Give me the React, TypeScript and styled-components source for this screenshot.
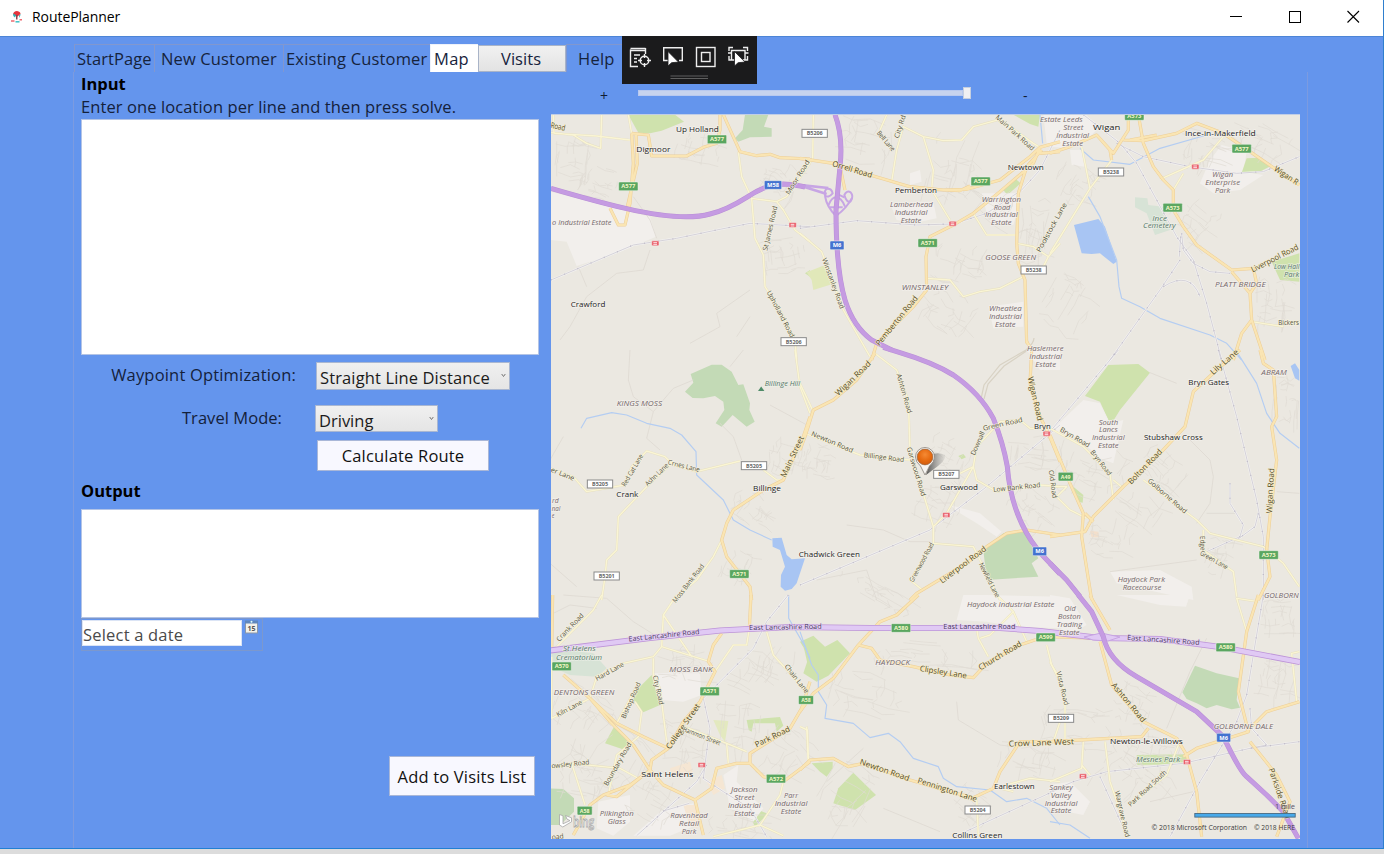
import React from "react";
import styled, { createGlobalStyle } from "styled-components";

const Global = createGlobalStyle`
  * { box-sizing: border-box; }
  body { margin: 0; overflow: hidden; background: #dcdcdc; font-family: "Open Sans", "Noto Sans", sans-serif; }
`;

const Window = styled.div`
  position: relative;
  width: 1384px;
  height: 849px;
  display: flex;
  flex-direction: column;
  background: #6495ed;
  border-right: 1px solid #2f7fce;
  border-bottom: 1px solid #2180d3;
  box-shadow: 0 1px 4px rgba(0, 0, 0, 0.45);
`;
const TitleBar = styled.header`
  height: 37px;
  flex: none;
  display: flex;
  align-items: center;
  padding: 0 0 3px 10px;
  background: #fff;
  border-bottom: 1px solid #4c84d6;
`;
const Title = styled.h1`
  flex: 1;
  margin: 0 0 0 9px;
  font-size: 14px;
  font-weight: 400;
  letter-spacing: -0.06px;
  color: #000;
`;
const Controls = styled.div`
  display: flex;
  width: 176px;
  height: 34px;
`;
const ControlButton = styled.button`
  flex: 1;
  padding: 0;
  border: 0;
  background: none;
  display: grid;
  place-items: center;
`;
const TabStrip = styled.nav`
  flex: none;
  height: 35px;
  padding: 7px 0 0 74px;
  display: flex;
`;
const Tab = styled.button<{ $w: number; $kind?: "active" | "button"; $ls?: number; $pl?: number }>`
  width: ${(p) => p.$w}px;
  height: 28px;
  margin: 0;
  padding: 0 0 0 ${(p) => p.$pl ?? 3}px;
  display: flex;
  align-items: center;
  white-space: nowrap;
  font: 16.5px "Open Sans", sans-serif;
  letter-spacing: ${(p) => p.$ls ?? 0.05}px;
  color: #16233c;
  border: 0 solid #8197cf;
  border-top-width: 1px;
  border-left-width: 1px;
  background: ${(p) => (p.$kind === "active" ? "#fff" : p.$kind === "button" ? "linear-gradient(#f1f1f1, #e3e3e3)" : "transparent")};
  ${(p) => p.$kind === "active" && "border-color: #eef2fa;"}
  ${(p) => p.$kind === "button" && "border: 1px solid #a9b4c8; height: 27px; margin-top: 1px;"}
`;
const Content = styled.main`
  flex: 1;
  width: 1235px;
  margin-left: 73px;
  padding-left: 7px;
  display: flex;
  border: 0 solid #7c9be0;
  border-left-width: 1px;
  border-right-width: 1px;
`;
const Form = styled.section`
  width: 458px;
  display: flex;
  flex-direction: column;
  color: #14213b;
`;
const Heading = styled.h2<{ $h: number; $lh: number }>`
  margin: 0;
  height: ${(p) => p.$h}px;
  line-height: ${(p) => p.$lh}px;
  font-size: 16.5px;
  font-weight: 700;
  color: #000;
`;
const Hint = styled.p`
  margin: 0;
  height: 23px;
  line-height: 22px;
  font-size: 16.5px;
  letter-spacing: 0.1px;
  white-space: nowrap;
`;
const TextBox = styled.textarea<{ $h: number }>`
  display: block;
  width: 458px;
  height: ${(p) => p.$h}px;
  resize: none;
  border: 1px solid #b3c4e6;
  background: #fff;
`;
const Row = styled.div<{ $mt: number; $label: number }>`
  margin-top: ${(p) => p.$mt}px;
  display: grid;
  grid-template-columns: ${(p) => p.$label}px auto;
  justify-content: start;
`;
const FieldLabel = styled.label<{ $right: number; $ls?: number }>`
  padding-right: ${(p) => p.$right}px;
  text-align: right;
  line-height: 26px;
  font-size: 16.5px;
  white-space: nowrap;
  letter-spacing: ${(p) => p.$ls ?? 0}px;
`;
const Combo = styled.div<{ $w: number; $h: number; $ls?: number }>`
  width: ${(p) => p.$w}px;
  height: ${(p) => p.$h}px;
  display: flex;
  justify-content: space-between;
  padding: 3px 3px 0 3px;
  line-height: 24px;
  font-size: 16.5px;
  white-space: nowrap;
  letter-spacing: ${(p) => p.$ls ?? 0}px;
  color: #1b1b1b;
  border: 1px solid #a9b7d2;
  background: linear-gradient(#f0f0f0, #e5e5e5);
  svg { margin-top: 7px; flex: none; }
`;
const PushButton = styled.button<{ $w: number; $h: number; $m: string }>`
  width: ${(p) => p.$w}px;
  height: ${(p) => p.$h}px;
  margin: ${(p) => p.$m};
  padding: 0;
  flex: none;
  font: 16.5px "Open Sans", sans-serif;
  letter-spacing: 0.18px;
  white-space: nowrap;
  color: #111;
  border: 1px solid #a9b7d8;
  background: #f8f8ff;
`;
const DatePicker = styled.div`
  width: 182px;
  height: 33px;
  padding: 1px 0 0 0;
  display: flex;
  gap: 3px;
  border: 1px solid #7c98cd;
`;
const DateInput = styled.div`
  width: 160px;
  height: 26px;
  padding-left: 0;
  line-height: 28px;
  font-size: 16.5px;
  letter-spacing: 0.2px;
  background: #fff;
  border: 1px solid #dbe4f5;
  color: #4a4a4a;
`;
const MapColumn = styled.section`
  margin-left: 12px;
  width: 749px;
`;
const ZoomBar = styled.div`
  height: 42px;
  padding: 15px 0 0 49px;
  display: flex;
  align-items: flex-start;
  color: #101c33;
  font-size: 14px;
  line-height: 18px;
`;
const Track = styled.div`
  width: 333px;
  height: 12px;
  margin: 0 52px 0 30px;
  display: flex;
  align-items: center;
  &::before { content: ""; flex: 1; height: 4px; background: #c7d3ee; border: 1px solid #b8c9ef; }
`;
const Thumb = styled.div`
  width: 8px;
  height: 12px;
  background: #f0f0f2;
  border: 1px solid #c5cfe0;
`;
const MapSvg = styled.svg`
  display: block;
  width: 749px;
  height: 725px;
  background: #ebe8e1;
  font-family: "Open Sans", sans-serif;
`;
const DebugBar = styled.div`
  position: absolute;
  left: 622px;
  top: 36px;
  width: 135px;
  height: 48px;
  background: #1b1b1c;
`;

/* ---------- map data: nine sheets, each drawn in its own 3x coordinates ---------- */
const sheets = {
  A: [550, 110], B: [800, 110], C: [1050, 110],
  D: [550, 350], E: [800, 350], F: [1050, 350],
  G: [550, 595], H: [800, 595], I: [1050, 595],
} as const;
type Sheet = keyof typeof sheets;
type Shape = [Sheet, string, string?];

const LIME = "#cfe2ad", GREEN = "#c3dab6", MINT = "#d7e3d6", PALE = "#f2efec", LAKE = "#a8c5f3";

const areas: Shape[] = [
  ["A", "M235,14L375,14L402,35L335,62L300,70L265,68Z", LIME],
  ["A", "M585,14L655,14L642,50L665,55L665,80L600,82L565,95L555,85L578,60Z", GREEN],
  ["A", "M3,245L180,290L300,320L318,380L200,430L80,468L50,395L3,390Z", PALE],
  ["A", "M780,480L765,490L780,500Z", LIME],
  ["B", "M20,487L75,465L85,500L105,520L40,540L35,510Z", "#e1e8b9"],
  ["B", "M640,14L720,14L715,50L690,42Z", LIME],
  ["B", "M610,240L645,205L662,220L622,255Z", LIME],
  ["B", "M270,280L400,275L410,325L340,340L290,330Z", PALE],
  ["B", "M330,190L360,180L365,215L330,225Z", PALE],
  ["B", "M545,250L650,250L660,280L640,345L575,345L560,310Z", PALE],
  ["B", "M565,590L670,575L670,650L580,655Z", PALE],
  ["B", "M730,14L780,14L780,110L740,100Z", PALE],
  ["C", "M0,14L110,14L140,60L110,90L60,115L0,110Z", PALE],
  ["C", "M60,120L100,120L105,170L65,165Z", PALE],
  ["C", "M515,105L590,125L580,185L640,195L570,240L490,250L450,220L480,150Z", PALE],
  ["C", "M590,145L630,143L658,170L620,190L575,188Z", LIME],
  ["C", "M72,345L145,327L165,350L200,455L190,462L150,430L125,432L95,430Z", LAKE],
  ["C", "M255,262L292,265L295,285L340,290L360,360L315,375L290,310L255,292Z", MINT],
  ["C", "M665,455L748,430L748,515L690,510Z", LIME],
  ["D", "M405,125L430,98L422,72L485,44L515,44L545,65L565,105L580,103L600,160L598,180L614,215L590,230L548,195L515,230L497,220L523,180L520,155L495,138L460,145L428,144Z", GREEN],
  ["D", "M667,565L695,563L710,615L725,628L765,625L740,700L725,717L705,722L692,710L693,675L705,650L690,600L668,590Z", LAKE],
  ["E", "M550,600L610,550L670,543L715,625L695,640L715,680L560,690Z", GREEN],
  ["E", "M475,318L490,312L498,322L485,328Z", LIME],
  ["E", "M450,465L540,490L605,545L590,560L530,520L480,490Z", PALE],
  ["E", "M680,0L780,0L780,60L720,60Z", PALE],
  ["F", "M175,45L265,42L300,68L210,180L190,212L175,210L150,155L105,138Z", LIME],
  ["F", "M0,245L100,150L150,160L180,220L220,210L190,340L150,325L80,260Z", PALE],
  ["F", "M180,665L330,660L425,710L430,750L200,700Z", PALE],
  ["F", "M70,410L100,435L98,458L85,455Z", LIME],
  ["F", "M722,48L735,40L748,60L748,92L735,85Z", LAKE],
  ["F", "M120,542L145,545L148,562L125,562Z", "#f3dfcb"],
  ["G", "M5,160L130,175L170,220L140,245L60,240L5,215Z", MINT],
  ["G", "M310,235L450,235L455,300L400,320L335,315L300,270Z", PALE],
  ["G", "M255,290L305,240L330,330L280,352L250,315Z", LIME],
  ["G", "M195,390L240,435L225,465L165,445Z", LIME],
  ["G", "M0,580L40,582L72,610L72,650L30,690L0,690Z", GREEN],
  ["G", "M590,375L690,366L700,392L680,410L675,385L610,385L605,410L596,405Z", LIME],
  ["G", "M490,375L535,378L525,440L510,420Z", "#e3e9bf"],
  ["G", "M625,645L650,655L640,670L615,695L603,670Z", LIME],
  ["G", "M145,620L240,600L240,680L190,722L140,700Z", PALE],
  ["G", "M520,540L565,510L560,560L640,640L610,680L540,640Z", PALE],
  ["G", "M330,650L430,625L440,690L360,722L250,722Z", PALE],
  ["G", "M360,520L420,500L430,540L370,545ZM400,630L440,630L442,700L418,690ZM470,560L515,540L525,580L490,600Z", "#f5e6d3"],
  ["G", "M762,160L780,130L780,240Z", LIME],
  ["H", "M0,140L40,122L75,155L112,135L150,175L85,242L50,260L10,235L25,190L12,160Z", LIME],
  ["H", "M35,505L98,500L98,520L80,545L60,530Z", LIME],
  ["H", "M160,533L228,600L165,645L100,625L115,580Z", LIME],
  ["H", "M490,0L560,0L780,5L780,100L650,95L560,80L470,75Z", PALE],
  ["I", "M200,0L420,0L408,35L330,30Z", PALE],
  ["I", "M0,0L60,10L110,90L60,118L0,80Z", PALE],
  ["I", "M435,212L500,235L567,250L560,315L570,338L545,343L500,330L470,340L440,325L410,312L397,292Z", GREEN],
  ["I", "M260,480L405,478L415,492L390,508L262,510Z", LIME],
  ["I", "M0,570L60,560L120,620L100,660L0,640Z", PALE],
];

const water: Shape[] = [
  ["D", "M93,235L110,205L185,188L230,195L290,220L360,235L395,255L438,305L440,375L520,450L550,510L600,540L665,570"],
  ["C", "M115,260L150,320L200,450L207,530L215,565L270,590L330,625L480,675L530,700L575,750M90,115L130,150L240,163L330,115L470,75"],
  ["F", "M560,5L620,100L650,190L690,250L748,295"],
  ["H", "M0,110L35,210L55,240L55,290L80,330L75,370L160,385L210,428L265,415L300,440L340,490L415,515L430,550L470,575L570,585L620,620L680,610L740,640L780,690"],
  ["I", "M0,680L60,690L120,730"],
  ["G", "M716,0L716,70L765,155L780,190"],
  ["B", "M720,14L728,100"],
];

const rails: Shape[] = [
  ["A", "M3,510L250,405L380,385L500,360L600,340L780,350"],
  ["B", "M0,355L170,332L350,345L460,342L560,310L665,240L720,180L780,60"],
  ["C", "M100,14L210,100L260,160L380,380L430,450L470,580L515,750M200,100L280,140L420,170L560,190L640,185L748,140M395,370L400,420L430,460L480,485L540,490M390,450L330,540L180,750M340,530Q420,480 450,560M392,380L388,440"],
  ["E", "M0,705L390,540L560,410L780,225"],
  ["F", "M0,245L205,0M505,0L560,200L620,450L640,560L640,750M540,400L540,460L580,525L570,560L470,605M625,490L615,530L560,570"],
  ["G", "M715,0L650,80L610,160L520,250L460,310L480,400L470,470L460,550L520,590L600,640L650,725M470,510L440,560L260,722M340,648L418,625"],
  ["I", "M640,0L590,300L560,380L450,560L360,725M748,440L600,460L400,505L170,530L70,560L0,590M150,545L230,720M600,340L605,400L650,450L600,460"],
  ["H", "M470,722L780,580"],
];

const majors: Shape[] = [
  ["A", "M245,70L250,160L240,280L225,345L205,345L180,295M258,70L262,160L232,290M245,70L295,75L305,138L410,138L460,112L500,100L510,60L510,14M520,14L570,125L620,137L660,133L690,143L780,147"],
  ["B", "M0,145L100,160L210,195L330,230L430,240L500,238L600,210L690,140L720,112L780,95M720,112L700,160L600,245L520,310L460,345L390,380L378,440L380,540L340,590L230,700L215,750M720,130L780,125M120,170L135,240M725,120L680,170L655,250L650,400L655,460L675,510L680,700M430,240L480,242L510,228"],
  ["C", "M0,130L60,110L140,75L180,120L185,150M140,75L190,130L235,60L235,14M220,90L280,92L380,70L440,40L520,70L600,125L680,180L748,225M265,14L280,100L310,170L340,210L370,240L370,300L400,350L440,405L545,480L610,475L620,520L600,550L605,630L645,750M545,485L600,550M605,630L575,670L550,750M240,90L320,75"],
  ["D", "M780,200L760,260L700,390L640,420L550,480L530,520L515,570L530,620L600,710L605,750"],
  ["E", "M225,10L170,90L100,150L40,180L15,260L0,300M680,-25L695,0L690,100L720,200L745,250L780,335M780,555L680,540L620,550L560,590L500,640L350,730L330,750"],
  ["F", "M570,0L500,60L430,125L405,230L330,310L220,410L130,500L105,545L0,560M0,255L60,400L100,490L95,560L125,750M630,0L640,40L670,60L680,200L665,230L680,330L660,500L650,600L660,680L625,750M105,490L130,515"],
  ["G", "M40,240L120,310L200,385L280,425L355,460L400,380L450,320L495,230L475,200L490,150L515,115M120,310L180,380L250,450L300,525L340,570L435,615L460,720M355,460L305,495L300,525L240,570L160,600L120,630L70,720M435,615L485,580L500,520L560,505L600,505L640,545L700,560L780,500M300,525L200,605L170,600M600,505L600,475L720,400L755,340L780,260M603,0L598,100M5,165L8,0"],
  ["H", "M355,0L290,60L240,80L175,150L100,250L40,295L0,350M175,150L215,160L240,195L340,215L450,240L520,248L560,205L660,150L720,130M0,525L30,495L100,490L145,515L190,505L330,555L450,590L520,608L580,580L600,530L660,440L780,440"],
  ["I", "M120,0L130,20L180,105M150,140L185,270L280,380L380,430L410,480L440,590L455,725M295,400L275,425L0,440M0,125L150,130M625,0L590,110L565,290L595,410L440,460L400,485M590,410L650,350L748,320M600,440L680,540L720,620L680,725"],
];

const minors: Shape[] = [
  ["A", "M10,14L12,70L140,78L240,90M155,14L152,115L110,100L70,75L3,68M235,14L245,70M565,125L575,200L605,265L680,275L700,300L735,360L780,395M605,265L615,385L640,435L645,530L690,600L735,690L740,750M680,275L710,260L780,160"],
  ["B", "M40,14L38,150L0,185M0,370L65,425L130,600L210,740M260,14L240,60M275,215L290,120L310,50L370,80L430,92L485,90L520,50L600,28L700,100L720,112M370,80L400,180L395,240L450,330M380,505L450,510L490,560L540,545L600,535L670,500M520,310L560,375L650,375M650,400L700,410L745,440L780,400M745,440L730,470"],
  ["C", "M95,110L120,235L0,430M185,150L120,235M520,80L460,150L330,208M400,190L370,240M605,635L700,650M750,635L690,640"],
  ["D", "M735,0L750,110L780,190M0,355L70,380L110,425L225,405L245,350L290,303L345,320L370,345L440,365L570,333M360,345L290,410L205,500L200,600L170,630L165,680L155,750M640,360L680,390L700,390M515,570L490,620L440,690L370,750"],
  ["E", "M225,10L290,60L325,150L330,300L400,530L400,580L330,690L370,722M15,250L180,315L330,330M400,530L440,490L520,350L480,370M520,350L530,290L600,215L660,210L690,235L740,235M520,350L530,390L590,425L720,405L780,410M400,580L520,590L560,670L600,750M0,100L40,185"],
  ["F", "M0,235L100,290L180,370L190,450M190,390L220,415M280,390L440,510L480,550L640,590L700,640L748,710M460,540L460,600L550,665L560,740M0,410L50,410L20,440L60,480L110,505"],
  ["G", "M0,170L20,155L130,45L155,0M380,0L340,60L335,155L480,200M340,60L425,185M310,190L310,240L330,280L350,440M5,185L5,370L120,310L140,245L220,205L310,185L335,155M255,320L275,350L265,425L200,480L175,600M0,520L65,505L210,520L265,550M65,505L105,630M200,385L265,265M390,390L530,445L590,470M530,445L535,505M598,100L590,150L550,150L495,230M650,110L670,180L770,290M700,560L690,600L630,690L490,725M630,690L700,722M770,395L775,500"],
  ["H", "M0,395L22,405L25,495M530,100L535,130L565,185M540,130L570,120L640,50L590,0M640,50L680,140M740,150L755,210L780,250M530,610L535,722M780,380L760,440M600,575L690,550L780,560M600,580L640,590"],
  ["I", "M0,200L45,290L45,440M100,440L95,520L0,560M95,510L120,540M165,440L180,560L235,720M240,630L350,540L385,450M590,110L560,10L625,20M748,170L725,175L740,320"],
];

const motorway: Shape[] = [
  ["A", "M3,235Q140,275 230,296Q400,335 480,312Q530,300 590,262Q650,222 700,222Q740,225 765,231"],
  ["B", "M105,14Q130,80 120,170L108,300Q108,480 135,570Q160,650 215,690L275,720"],
  ["E", "M250,-8L300,8Q400,38 460,75Q540,130 580,205Q610,280 622,350Q630,460 680,550Q705,595 750,640L780,672"],
  ["F", "M0,640L50,690Q70,715 90,740"],
  ["I", "M85,0L125,50L160,125Q175,195 260,245L440,350L520,425Q570,530 590,545L650,600L700,650L745,730"],
];

/* faint residential streets: sheet, centre, radii, heading */
const towns: [Sheet, number, number, number, number, number][] = [
  ["A", 80, 150, 70, 70, 5], ["A", 150, 220, 60, 50, 20], ["A", 450, 110, 70, 50, 12], ["A", 700, 440, 60, 70, 80], ["A", 690, 210, 60, 60, 30],
  ["B", 450, 180, 70, 110, 15], ["B", 200, 90, 100, 70, 10], ["B", 480, 460, 80, 70, 20], ["B", 700, 360, 60, 110, 5], ["B", 450, 600, 90, 70, 40], ["B", 560, 260, 90, 60, 35],
  ["C", 80, 220, 70, 60, 30], ["C", 460, 120, 80, 60, 15], ["C", 430, 330, 80, 70, 40], ["C", 60, 570, 70, 90, 30], ["C", 650, 590, 60, 90, 5], ["C", 620, 80, 110, 50, 30],
  ["D", 710, 320, 60, 60, 15], ["D", 620, 480, 70, 50, 35], ["D", 560, 650, 50, 50, 20],
  ["E", 420, 440, 70, 80, 20], ["E", 450, 310, 60, 50, 30], ["E", 700, 300, 90, 60, 5], ["E", 700, 470, 70, 60, 40], ["E", 60, 330, 60, 50, 10], ["E", 220, 720, 120, 30, 30],
  ["F", 80, 370, 70, 60, 20], ["F", 250, 430, 120, 80, 35], ["F", 500, 620, 50, 60, 15], ["F", 710, 150, 40, 80, 3], ["F", 180, 560, 70, 60, 15], ["F", 340, 360, 70, 50, 40],
  ["G", 80, 340, 80, 70, 35], ["G", 180, 470, 120, 100, 40], ["G", 400, 450, 90, 80, 12], ["G", 400, 200, 90, 60, 5], ["G", 640, 220, 90, 90, 25], ["G", 560, 400, 70, 80, 5], ["G", 300, 600, 90, 80, 30], ["G", 700, 480, 90, 80, 40], ["G", 100, 560, 80, 50, 10], ["G", 560, 690, 110, 50, 10],
  ["H", 200, 300, 120, 60, 15], ["H", 370, 190, 150, 50, 5], ["H", 120, 600, 90, 110, 30], ["H", 680, 490, 90, 70, 15], ["H", 520, 640, 70, 50, 40],
  ["I", 100, 400, 130, 70, 5], ["I", 260, 560, 110, 80, 40], ["I", 250, 330, 60, 60, 25], ["I", 680, 250, 60, 80, 10], ["I", 690, 70, 60, 60, 0], ["I", 320, 450, 80, 40, 15],
];
const rnd = (n: number) => {
  const v = Math.sin(n * 127.1 + 11.7) * 43758.5453;
  return v - Math.floor(v);
};
const streetPath = (seed: number, cx: number, cy: number, rx: number, ry: number, deg: number) => {
  const a = (deg * Math.PI) / 180;
  const at = (u: number, v: number) =>
    `${(cx + u * rx * Math.cos(a) - v * ry * Math.sin(a)).toFixed(0)},${(cy + u * rx * Math.sin(a) + v * ry * Math.cos(a)).toFixed(0)}`;
  let d = "";
  for (let i = 0; i < 20; i++) {
    const k = seed * 100 + i * 5;
    const p = rnd(k) * 2 - 1, q = rnd(k + 1) * 1.4 - 1, len = 0.3 + rnd(k + 2) * 0.8, bend = (rnd(k + 3) - 0.5) * 0.35;
    d += i % 2 ? `M${at(p, q)}L${at(p + bend, q + len / 2)}L${at(p + bend / 3, q + len)}` : `M${at(q, p)}L${at(q + len / 2, p + bend)}L${at(q + len, p)}`;
  }
  return d;
};
const lanes: Shape[] = [
  ["A", "M300,420L280,480L200,490L110,560L60,650L30,690M85,470L110,530M600,540L500,610L510,650L420,700M600,620L560,680M250,260L300,330L320,385"],
  ["D", "M240,0L235,90L250,140L310,185L290,265L330,300M310,185L370,115L430,90M580,0L540,50M510,220L550,260L575,330M780,230L660,165M0,330L40,260M0,640L80,710"],
  ["E", "M140,525L250,540L330,575L390,575M230,750L200,660L50,690"],
  ["F", "M300,68L380,100M420,270L480,330L490,380L480,460L440,520M470,490L560,490M748,430L680,425M180,665L440,630"],
  ["H", "M470,320L475,375L600,450L640,455M250,640L420,710M80,560L190,460"],
  ["G", "M0,60L60,30L140,40M40,0L170,10L250,80L330,130"],
  ["I", "M470,130L420,230L350,400M300,620L430,590"],
];

type Kind = "town" | "road" | "lane" | "area" | "trunk" | "park";
type Text = [Sheet, number, number, string, Kind, number, number?];
/* sheet, centre x, centre y, text, kind, width, rotation */
const texts: Text[] = [
  ["A", 442, 58, "Up Holland", "town", 128], ["A", 310, 118, "Digmoor", "town", 102], ["A", 114, 582, "Crawford", "town", 104],
  ["A", 24, 50, "Road", "road", 44, 12], ["A", 95, 338, "o Industrial Estate", "area", 178],
  ["A", 743, 202, "Moor Road", "lane", 118, -58], ["A", 660, 355, "St James Road", "lane", 136, -77], ["A", 692, 612, "Upholland Road", "lane", 156, 62],
  ["B", 157, 178, "Orrell Road", "road", 124, 17], ["B", 300, 50, "City Rd", "lane", 72, -72], ["B", 258, 93, "Bell Lane", "lane", 72, 50],
  ["B", 348, 242, "Pemberton", "town", 126], ["B", 677, 173, "Newtown", "town", 108], ["B", 645, 68, "Main Park Road", "lane", 148, 42],
  ["B", 334, 285, "Lamberhead", "area", 128], ["B", 333, 309, "Industrial", "area", 98], ["B", 333, 333, "Estate", "area", 62],
  ["B", 604, 269, "Warrington", "area", 118], ["B", 606, 292, "Road", "area", 50], ["B", 604, 315, "Industrial", "area", 98], ["B", 604, 338, "Estate", "area", 62],
  ["B", 632, 443, "GOOSE GREEN", "area", 152], ["B", 375, 533, "WINSTANLEY", "area", 140],
  ["B", 100, 520, "Winstanley Road", "lane", 160, 70], ["B", 290, 632, "Pemberton Road", "road", 185, -51],
  ["B", 616, 596, "Wheatlea", "area", 98], ["B", 616, 620, "Industrial", "area", 98], ["B", 616, 644, "Estate", "area", 62],
  ["B", 736, 716, "Haslemere", "area", 110], ["B", 737, 739, "Industrial", "area", 98], ["E", 737, 43, "Estate", "area", 62],
  ["C", 5, 352, "Poolstock Lane", "lane", 166, -61],
  ["C", 34, 28, "Estate Leeds", "area", 128], ["C", 70, 52, "Street", "area", 60], ["C", 68, 76, "Industrial", "area", 98], ["C", 68, 100, "Estate", "area", 62],
  ["C", 170, 53, "Wigan", "town", 82], ["C", 511, 70, "Ince-in-Makerfield", "town", 212],
  ["C", 518, 195, "Wigan", "area", 62], ["C", 518, 219, "Enterprise", "area", 104], ["C", 518, 243, "Park", "area", 46],
  ["C", 709, 196, "Wigan R", "road", 82, 33], ["C", 329, 325, "Ince", "park", 44], ["C", 328, 348, "Cemetery", "park", 98],
  ["C", 674, 445, "Liverpool Road", "road", 156, -27], ["C", 710, 471, "Low Hall", "park", 76], ["C", 725, 494, "Park", "park", 46],
  ["C", 571, 524, "PLATT BRIDGE", "area", 152], ["C", 716, 637, "Bickers", "lane", 62],
  ["D", 268, 162, "KINGS MOSS", "area", 136], ["D", 697, 101, "Billinge Hill", "park", 106],
  ["D", 38, 372, "er Lane", "lane", 74, 22], ["D", 247, 361, "Red Cat Lane", "lane", 108, -60], ["D", 320, 374, "Ashn Lane", "lane", 88, -44], ["D", 402, 348, "Crnes Lane", "lane", 98, 14],
  ["D", 727, 320, "Main Street", "road", 134, -65], ["D", 232, 433, "Crank", "town", 66], ["D", 651, 416, "Billinge", "town", 84],
  ["D", 16, 452, "rd", "area", 20], ["D", 18, 475, "nal", "area", 26], ["D", 9, 498, "e", "area", 8],
  ["D", 415, 700, "Moss Bank Road", "lane", 140, -52],
  ["E", 159, 85, "Wigan Road", "road", 138, -44], ["E", 313, 130, "Ashton Road", "lane", 122, 74], ["E", 97, 276, "Newton Road", "lane", 134, 23], ["E", 252, 322, "Billinge Road", "lane", 122, 7],
  ["E", 349, 365, "Garswood Road", "lane", 152, 73], ["E", 533, 280, "Downall", "lane", 76, -66], ["E", 608, 222, "Green Road", "lane", 122, -13],
  ["E", 706, 146, "Wigan Road", "road", 134, 77], ["E", 727, 229, "Bryn", "town", 50], ["E", 477, 412, "Garswood", "town", 114],
  ["E", 650, 412, "Low Bank Road", "lane", 142, -6], ["E", 759, 402, "Old Road", "lane", 84, 82], ["E", 88, 612, "Chadwick Green", "town", 184],
  ["E", 365, 637, "Greenwood Road", "lane", 130, -61], ["E", 489, 644, "Liverpool Road", "road", 168, -37], ["E", 568, 690, "Newfield Lane", "lane", 114, 63],
  ["F", 523, 36, "Lily Lane", "road", 102, -41], ["F", 476, 97, "Bryn Gates", "town", 122], ["F", 672, 69, "ABRAM", "area", 76], ["F", 370, 262, "Stubshaw Cross", "town", 176],
  ["F", 175, 217, "South", "area", 58], ["F", 175, 240, "Lancs", "area", 56], ["F", 175, 264, "Industrial", "area", 98], ["F", 175, 287, "Estate", "area", 62],
  ["F", 75, 262, "Bryn Road", "lane", 100, 30], ["F", 153, 338, "Bryn Road", "lane", 90, 52], ["F", 285, 350, "Bolton Road", "road", 136, -46],
  ["F", 352, 438, "Golborne Road", "lane", 148, 41], ["F", 661, 422, "Wigan Road", "road", 136, -87], ["F", 458, 580, "Edge", "lane", 44, 88], ["F", 492, 630, "Green Lane", "lane", 92, 29],
  ["F", 274, 690, "Haydock Park", "area", 142], ["F", 276, 712, "Racecourse", "area", 116], ["F", 694, 738, "GOLBORN", "area", 104],
  ["G", 60, 97, "Crank Road", "lane", 108, -46], ["G", 88, 162, "St Helens", "park", 98], ["G", 87, 187, "Crematorium", "park", 138],
  ["G", 342, 121, "East Lancashire Road", "trunk", 214, -6], ["G", 706, 96, "East Lancashire Road", "trunk", 218, -1],
  ["G", 179, 229, "Hard Lane", "lane", 94, -29], ["G", 423, 223, "MOSS BANK", "area", 130], ["G", 102, 293, "DENTONS GREEN", "area", 182], ["G", 58, 340, "Kiln Lane", "lane", 84, -28],
  ["G", 243, 316, "Bishop Road", "lane", 116, -66], ["G", 325, 285, "City Road", "lane", 90, 77], ["G", 740, 251, "Chain Lane", "lane", 104, 52],
  ["G", 399, 394, "College Street", "road", 160, -55], ["G", 455, 423, "Hammon Street", "lane", 120, 21], ["G", 667, 425, "Park Road", "road", 114, -26],
  ["G", 203, 507, "Boundary Road", "lane", 146, -60], ["G", 61, 507, "owsley Road", "lane", 114, -6], ["G", 352, 537, "Saint Helens", "town", 156],
  ["G", 200, 657, "Pilkington", "area", 102], ["G", 200, 681, "Glass", "area", 54], ["G", 417, 662, "Ravenhead", "area", 112], ["G", 417, 686, "Retail", "area", 60], ["G", 417, 710, "Park", "area", 44],
  ["G", 583, 583, "Jackson", "area", 80], ["G", 583, 607, "Street", "area", 60], ["G", 583, 631, "Industrial", "area", 98], ["G", 583, 655, "Estate", "area", 62],
  ["G", 723, 603, "Parr", "area", 42], ["G", 723, 627, "Industrial", "area", 98], ["G", 723, 651, "Estate", "area", 62], ["G", 23, 725, "oad", "lane", 36, -6],
  ["H", 278, 203, "HAYDOCK", "area", 104], ["H", 430, 231, "Clipsley Lane", "road", 142, 9], ["H", 600, 182, "Church Road", "road", 146, -31],
  ["H", 632, 30, "Haydock Industrial Estate", "area", 262], ["H", 538, 96, "East Lancashire Road", "trunk", 216],
  ["H", 254, 525, "Newton Road", "road", 156, 19], ["H", 442, 584, "Pennington Lane", "road", 186, 18], ["H", 724, 443, "Crow Lane West", "road", 196, -2],
  ["H", 643, 573, "Earlestown", "town", 122], ["H", 532, 720, "Collins Green", "town", 150],
  ["I", 60, 40, "Old", "area", 34], ["I", 58, 64, "Boston", "area", 68], ["I", 58, 88, "Trading", "area", 76], ["I", 58, 112, "Estate", "area", 62],
  ["I", 340, 135, "East Lancashire Road", "trunk", 218, 4], ["I", 38, 280, "Vista Road", "lane", 104, 76], ["I", 236, 322, "Ashton Road", "road", 146, 50],
  ["I", 580, 395, "GOLBORNE DALE", "area", 178], ["I", 289, 440, "Newton-le-Willows", "town", 218], ["I", 324, 494, "Mesnes Park", "park", 132],
  ["I", 292, 580, "Park Road South", "lane", 150, -43], ["I", 217, 657, "Wargrave Road", "lane", 142, 77], ["I", 689, 595, "Parkside Road", "road", 158, 71],
  ["I", 33, 578, "Sankey", "area", 70], ["I", 33, 602, "Valley", "area", 62], ["I", 33, 625, "Industrial", "area", 98], ["I", 33, 648, "Estate", "area", 62],
];
const styles: Record<Kind, { size: number; fill: string; italic?: boolean; halo: string; weight?: number }> = {
  town: { size: 24, fill: "#1d1d1d", halo: "#f6f4f0", weight: 500 },
  road: { size: 24, fill: "#544c28", halo: "#f8eecb", weight: 500 },
  lane: { size: 20.5, fill: "#56533f", halo: "#f7f3df" },
  area: { size: 21, fill: "#75686b", italic: true, halo: "#f5f2ee" },
  park: { size: 21, fill: "#577769", italic: true, halo: "#edf1e8" },
  trunk: { size: 21, fill: "#4b3960", halo: "#e6d4f5", weight: 500 },
};

type Badge = [Sheet, number, number, string, "g" | "w" | "b" | "r"];
const badges: Badge[] = [
  ["A", 501, 88, "A577", "g"], ["A", 235, 229, "A577", "g"], ["A", 669, 225, "M58", "b"], ["A", 316, 400, "", "r"], ["A", 728, 345, "", "r"], ["A", 731, 695, "B5206", "w"],
  ["B", 44, 70, "B5206", "w"], ["B", 542, 214, "A577", "g"], ["B", 458, 341, "", "r"], ["B", 111, 406, "M6", "b"], ["B", 383, 399, "A571", "g"], ["B", 701, 480, "B5238", "w"],
  ["C", 253, 18, "A573", "g"], ["C", 575, 116, "A577", "g"], ["C", 436, 170, "", "r"], ["C", 183, 186, "B5238", "w"], ["C", 368, 293, "A573", "g"],
  ["D", 612, 347, "B5205", "w"], ["D", 150, 402, "B5205", "w"], ["D", 170, 678, "B5201", "w"], ["D", 568, 672, "A571", "g"],
  ["E", 439, 373, "B5207", "w"], ["E", 740, 251, "", "r"], ["E", 439, 495, "", "r"], ["E", 719, 604, "M6", "b"],
  ["F", 47, 380, "A49", "g"], ["F", 656, 615, "A573", "g"],
  ["G", 35, 214, "A570", "g"], ["G", 479, 289, "A571", "g"], ["G", 768, 315, "A58", "g"], ["G", 455, 510, "", "r"], ["G", 678, 551, "A572", "g"], ["G", 104, 647, "A58", "g"],
  ["H", 303, 99, "A580", "g"], ["H", 737, 127, "A599", "g"], ["H", 533, 645, "B5204", "w"], ["H", 783, 370, "B5209", "w"],
  ["I", 527, 157, "A580", "g"], ["I", 521, 428, "M6", "b"], ["I", 411, 501, "", "r"], ["I", 99, 544, "", "r"],
];

const place = (s: Sheet) => `translate(${sheets[s][0]} ${sheets[s][1]}) scale(0.33333)`;

const Lines = ({ data, stroke, width, dash }: { data: Shape[]; stroke: string; width: number; dash?: string }) => (
  <g fill="none" stroke={stroke} strokeWidth={width} strokeDasharray={dash} strokeLinejoin="round">
    {data.map(([s, d], i) => <path key={i} d={d} transform={place(s)} />)}
  </g>
);

const RouteBadge = ({ b: [s, x, y, t, k] }: { b: Badge }) => {
  const w = k === "r" ? 22 : k === "w" ? 76 : k === "b" ? (t.length > 2 ? 52 : 42) : t.length > 3 ? 58 : 45;
  const h = k === "r" ? 15 : k === "w" ? 24 : 26;
  const fill = { g: "#5aa660", w: "#fff", b: "#4372d0", r: "#ea5f6b" }[k];
  return (
    <g transform={`${place(s)} translate(${x} ${y})`}>
      <rect x={-w / 2} y={-h / 2} width={w} height={h} rx={k === "w" ? 0 : 3} fill={fill} stroke={k === "w" ? "#8a8a8a" : "#f2f5ee"} strokeWidth={k === "w" ? 3 : 1.5} />
      {k === "r" ? (
        <path d="M-6,-2H5M-6,3H5" stroke="#fff" strokeWidth="2.5" />
      ) : (
        <text y="6" textAnchor="middle" fontSize="18" fontWeight="700" fill={k === "w" ? "#666" : k === "g" ? "#f4f7c8" : "#fff"} textLength={k === "w" ? 48 : w - 16} lengthAdjust="spacingAndGlyphs">{t}</text>
      )}
    </g>
  );
};

const trunkRoad = "M550,650.5L650,638L720,630.5L790,627L870,628L1000,628L1040,631L1100,638L1160,639L1220,647L1300,662";

const MapView = () => (
  <MapSvg viewBox="551 114 749 725">
    <defs>
      <radialGradient id="pin" cx="50%" cy="35%" r="65%">
        <stop offset="0" stopColor="#f58a34" /><stop offset="0.6" stopColor="#e66a10" /><stop offset="1" stopColor="#cf5c10" />
      </radialGradient>
      <linearGradient id="pinShade" x1="0" x2="1">
        <stop offset="0" stopColor="#444" stopOpacity="0.9" /><stop offset="1" stopColor="#777" stopOpacity="0.1" />
      </linearGradient>
    </defs>
    <rect x="550" y="114" width="751" height="726" fill="#ebe8e1" />
    {areas.map(([s, d, c], i) => <path key={i} d={d} fill={c} transform={place(s)} />)}
    <g fill="none" stroke="#dfdbd3" strokeWidth="2">
      {towns.map(([s, ...r], i) => <path key={i} transform={place(s)} d={streetPath(i + 1, ...(r as [number, number, number, number, number]))} />)}
    </g>
    <Lines data={lanes} stroke="#dedad3" width={2.5} />
    <path d="M981,399L984,385L1000,365L1026,350Q1034,343 1034,338M984,399L988,384L1004,366L1028,350" fill="none" stroke="#d8d2c4" strokeWidth="1.2" />
    <Lines data={water} stroke="#b4cdf2" width={3.5} />
    <Lines data={rails} stroke="#f4f3f3" width={6} />
    <Lines data={rails} stroke="#cfcbd3" width={2.5} />
    <Lines data={rails} stroke="#c0bcc8" width={4} dash="3 40" />
    <Lines data={minors} stroke="#e6dfc0" width={6.5} />
    <Lines data={minors} stroke="#faf5d4" width={4.2} />
    <Lines data={majors} stroke="#ecce98" width={9.5} />
    <Lines data={majors} stroke="#fae5b3" width={6.5} />
    <g fill="none" strokeLinejoin="round">
      <path d={trunkRoad} stroke="#bd94d8" strokeWidth="6" />
      <path d={trunkRoad} stroke="#e0c9f4" strokeWidth="4.4" />
      <path d="M1084,637L1101,633L1120,637L1108,641L1093,640Z" fill="#e0c9f4" stroke="#c7a4e2" />
    </g>
    <g fill="none" stroke="#c7a5e4" strokeWidth="6" strokeLinejoin="round" transform={place("B")}>
      <path d="M75,258Q80,290 108,318Q142,292 155,265" />
      <path d="M98,250Q95,235 82,236Q72,240 75,256Q84,266 98,250Z" />
      <path d="M133,255Q140,240 152,247Q162,258 152,274Q140,280 133,255Z" />
      <path d="M85,286Q95,262 108,262Q124,262 135,290M90,292L128,292M108,250L133,262" />
      <path d="M10,226L85,234M-15,222L80,252" strokeWidth="8" />
    </g>
    <Lines data={motorway} stroke="#b98fd6" width={15} />
    <Lines data={motorway} stroke="#c59be2" width={12} />
    <path d="M758,391l3.2-4.5 3.2,4.5z" fill="#4f8b68" />
    {texts.map(([s, x, y, t, k, w, r], i) => {
      const st = styles[k];
      return (
        <text key={i} transform={`${place(s)} translate(${x} ${y}) rotate(${r ?? 0})`} y={st.size * 0.34} textAnchor="middle"
          textLength={w} lengthAdjust="spacingAndGlyphs" fontSize={st.size} fontWeight={st.weight ?? 400} fontStyle={st.italic ? "italic" : "normal"}
          fill={st.fill} stroke={st.halo} strokeWidth="4" strokeOpacity="0.75" paintOrder="stroke">{t}</text>
      );
    })}
    {badges.map((b, i) => <RouteBadge key={i} b={b} />)}
    <path d="M926,475L933,454Q939,452 945,455Q946,460 938,466Z" fill="url(#pinShade)" />
    <path d="M925,475L920.500,466Q915.500,462 915.500,457A9.500,9.500 0 0 1 934.500,457Q934.500,462 929.500,466Z" fill="#f7f5f2" stroke="#86807a" strokeWidth="0.8" />
    <circle cx="925" cy="457" r="7.900" fill="url(#pin)" stroke="#8b5a36" strokeWidth="0.6" />
    <g fill="#fff" stroke="#a7a7a7" strokeWidth="0.8">
      <path d="M559.500,814.500l3.500,1.300v8l7,-3.200 -3,-1.500 -1.500,-3.600 6,2.300v4l-8.700,5.200 -3.300,-2z" />
      <text x="573" y="826.500" fontSize="14" fontWeight="600" textLength="21" lengthAdjust="spacingAndGlyphs">bing</text>
    </g>
    <text x="1275" y="809" fontSize="7.500" fill="#5a5568" textLength="20">1 mile</text>
    <rect x="1194.800" y="813.500" width="100.400" height="3.600" fill="#47a9ea" stroke="#496a82" strokeWidth="0.9" />
    <g fontSize="7.500" fill="#3c3c40">
      <text x="1151.500" y="829.500" textLength="95.500" lengthAdjust="spacingAndGlyphs">© 2018 Microsoft Corporation</text>
      <text x="1254" y="829.500" textLength="41" lengthAdjust="spacingAndGlyphs">© 2018 HERE</text>
    </g>
    <path d="M551,114.500H1300" fill="none" stroke="#c0cde6" />
  </MapSvg>
);

const Cursor = ({ x, y }: { x: number; y: number }) => (
  <path transform={`translate(${x} ${y})`} d="M0,0V14.500L3.600,11.200L10.500,10.600Z" fill="#fff" stroke="#1b1b1c" strokeWidth="0.8" />
);

const DebugTools = () => (
  <DebugBar>
    <svg width="135" height="48" fill="none" stroke="#eee" strokeWidth="1.4">
      <path d="M8.500,13.500V30.500H16M8.500,12.500H23.500M8.500,14.500H23.500M23.500,12V18M12,19H18M12,22.500H15M12,26H15" />
      <circle cx="22.500" cy="24.500" r="4.300" />
      <path d="M22.500,18V22M22.500,27V31M16,24.500H20M25,24.500H29" />
      <path d="M47,24.500H41.700V11.700H60.300V24.500H57" />
      <rect x="74.500" y="11.500" width="18.500" height="19" /><rect x="79.500" y="16.500" width="8.500" height="9" />
      <path d="M107,15V11.500H111M121,11.500H125.500V15M107,20V24H111M125.500,20V24H122M113,24H109.500V14.500H123V24H120M106,17H109M123,17H126.500" />
      <path d="M48.500,40H86M48.500,42.500H86" stroke="#5f5f5f" strokeWidth="1.200" />
      <g stroke="none"><Cursor x={46} y={15.500} /><Cursor x={112.500} y={15.500} /></g>
    </svg>
  </DebugBar>
);

const Chevron = () => (
  <svg width="5" height="5" viewBox="0 0 5 5"><path d="M0.700,1L2.500,3.500L4.300,1" fill="none" stroke="#777" strokeWidth="1" /></svg>
);

export default function App() {
  return (
    <>
      <Global />
      <Window>
        <TitleBar>
          <svg width="13" height="14" viewBox="0 0 13 14">
            <path d="M3,4.500Q3.500,1 7,1Q10.500,1.500 10.500,4L7.500,6.500H6.500Z" fill="#e5343d" />
            <path d="M3.200,3.500Q2.500,6 5,7.500L6,5ZM9,5.500L11,4L9,8Z" fill="#2ab4b8" />
            <path d="M6,5H7.500V9.500H6Z" fill="#8b4550" />
            <path d="M5.500,11.800H9.500" stroke="#3fc0c4" strokeWidth="1.500" />
            <path d="M1,11H4.500M9.500,9.800H12" stroke="#ee6a70" strokeWidth="1.400" />
          </svg>
          <Title>RoutePlanner</Title>
          <Controls>
            <ControlButton aria-label="Minimize"><svg width="12" height="12"><path d="M0,5.500H12" stroke="#000" /></svg></ControlButton>
            <ControlButton aria-label="Maximize"><svg width="13" height="12"><rect x="0.500" y="0.500" width="11" height="11" fill="none" stroke="#000" /></svg></ControlButton>
            <ControlButton aria-label="Close"><svg width="14" height="13"><path d="M0.500,1L12,12.500M12,1L0.500,12.500" stroke="#000" strokeWidth="1.100" /></svg></ControlButton>
          </Controls>
        </TitleBar>
        <TabStrip>
          <Tab $w={80} $pl={2}>StartPage</Tab>
          <Tab $w={129} $pl={6} $ls={0.14}>New Customer</Tab>
          <Tab $w={147} $pl={2} $ls={0.16}>Existing Customer</Tab>
          <Tab $w={48} $kind="active" $pl={3} $ls={0.3}>Map</Tab>
          <Tab $w={88} $kind="button" $pl={22}>Visits</Tab>
          <Tab $w={57} $pl={11} $ls={0.25}>Help</Tab>
        </TabStrip>
        <Content>
          <Form>
            <Heading $h={24} $lh={24}>Input</Heading>
            <Hint>Enter one location per line and then press solve.</Hint>
            <TextBox $h={236} aria-label="Locations" />
            <Row $mt={7} $label={235}>
              <FieldLabel $right={20} $ls={0.18}>Waypoint Optimization:</FieldLabel>
              <Combo $w={194} $h={28} $ls={0.13}>Straight Line Distance<Chevron /></Combo>
            </Row>
            <Row $mt={15} $label={234}>
              <FieldLabel $right={33} $ls={0.05}>Travel Mode:</FieldLabel>
              <Combo $w={123} $h={27}>Driving<Chevron /></Combo>
            </Row>
            <PushButton $w={172} $h={31} $m="8px 0 0 236px">Calculate Route</PushButton>
            <Heading $h={38} $lh={40}>Output</Heading>
            <TextBox $h={109} aria-label="Route" />
            <DatePicker>
              <DateInput>Select a date</DateInput>
              <svg width="13" height="14">
                <rect x="0.500" y="2.500" width="12" height="10.500" fill="#f3f1ea" stroke="#8b97a8" />
                <path d="M0,0.500H13V3.500H0Z" fill="#5f87bd" /><circle cx="6.500" cy="1.800" r="1" fill="#dff" />
                <text x="2.500" y="11" fontSize="7" fontWeight="700" fill="#555" textLength="8">15</text>
              </svg>
            </DatePicker>
            <PushButton $w={146} $h={40} $m="105px 0 0 308px">Add to Visits List</PushButton>
          </Form>
          <MapColumn>
            <ZoomBar>+<Track><Thumb /></Track>-</ZoomBar>
            <MapView />
          </MapColumn>
        </Content>
        <DebugTools />
      </Window>
    </>
  );
}
